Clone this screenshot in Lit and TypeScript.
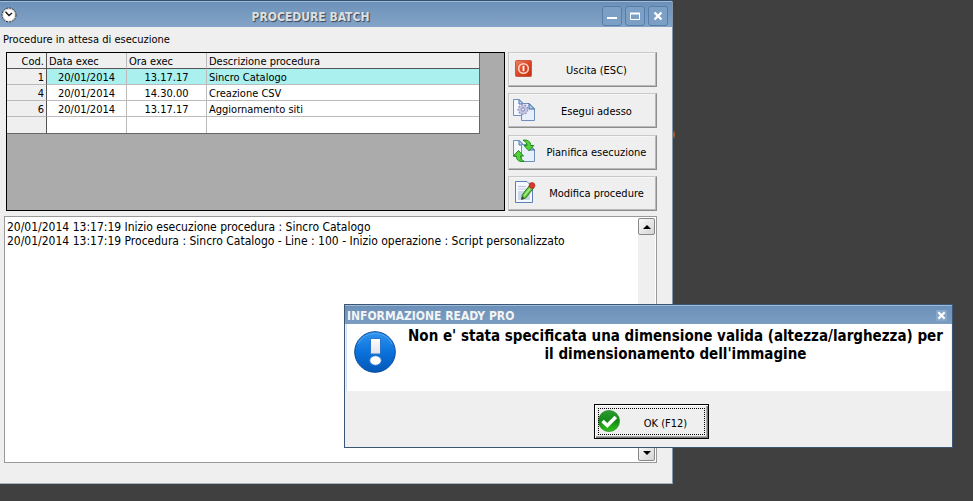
import { LitElement, html, css, svg } from "lit";
import { customElement, state } from "lit/decorators.js";
import { classMap } from "lit/directives/class-map.js";

interface Procedure {
  code: string;
  date: string;
  time: string;
  description: string;
}

const PROCEDURES: Procedure[] = [
  { code: "1", date: "20/01/2014", time: "13.17.17", description: "Sincro Catalogo" },
  { code: "4", date: "20/01/2014", time: "14.30.00", description: "Creazione CSV" },
  { code: "6", date: "20/01/2014", time: "13.17.17", description: "Aggiornamento siti" },
  { code: "", date: "", time: "", description: "" },
];

const LOG = [
  "20/01/2014 13:17:19 Inizio esecuzione procedura : Sincro Catalogo",
  "20/01/2014 13:17:19 Procedura : Sincro Catalogo - Line : 100 - Inizio operazione : Script personalizzato",
].join("\n");

const pages = svg`
  <path d="M1.5 1.5H7L11.5 6V17.5H1.5Z" fill="#f4f8ff" stroke="#6f8fbc"/>
  <path d="M7 1.5V6H11.5Z" fill="#c9dcf5" stroke="#4f74aa"/>
  <path d="M9.5 5.5H17L22.5 11V22.5H9.5Z" fill="#e6effc" stroke="#6f8fbc"/>
  <path d="M17 5.5V11H22.5Z" fill="#b7cfee" stroke="#3f689f"/>`;

const powerIcon = html`<svg class="icon" viewBox="0 0 24 24" aria-hidden="true">
  <defs><linearGradient id="p" x1="0" y1="0" x2="1" y2="1"><stop offset="0" stop-color="#ee8064"/><stop offset=".5" stop-color="#db4826"/><stop offset="1" stop-color="#c62f12"/></linearGradient></defs>
  <rect x="3.5" y="3.5" width="16" height="16" rx="1" fill="url(#p)" stroke="#c25a44"/>
  <circle cx="11.5" cy="11.5" r="4.8" fill="none" stroke="#ffd9cc" stroke-width="1.5"/>
  <path d="M11.5 8.800V14.200" stroke="#fff" stroke-width="1.8"/>
</svg>`;

const runIcon = html`<svg class="icon" viewBox="0 0 24 24" aria-hidden="true">
  ${pages}
  <circle cx="11" cy="11.5" r="4.6" fill="#c4c4e2" stroke="#9a9ac6" stroke-width="1.8" stroke-dasharray="2 1.2"/>
  <circle cx="11" cy="11.5" r="4" fill="#c3c3e0"/>
  <circle cx="11" cy="11.5" r="1.6" fill="#eeeefa" stroke="#8484b5"/>
</svg>`;

const planIcon = html`<svg class="icon" viewBox="0 0 24 24" aria-hidden="true">
  ${pages}
  <path d="M11 1.2C16 .4 18.7 3 18.8 6.500H21.8L17 11.8L12 6.500H15C15 4.5 13.8 2.6 11 1.2Z" fill="#55d13b" stroke="#1d8a17"/>
  <path d="M12.2 22.3C7.5 23.2 4.4 21.4 4.3 17H1.3L6.5 11.5L11.5 17H8.5C8.5 19.4 9.7 21.2 12.2 22.3Z" fill="#55d13b" stroke="#1d8a17"/>
</svg>`;

const editIcon = html`<svg class="icon" viewBox="0 0 24 24" aria-hidden="true">
  <path d="M3.5 1.5H15L20.5 7V22.5H3.5Z" fill="#f5f9ff" stroke="#5c80b5"/>
  <path d="M6 6.500H14M6 9H14" stroke="#b9c6da"/>
  <rect x="6" y="11" width="12" height="9" fill="#cbd7e8"/>
  <path d="M9.500 19.500L10.300 14.800L17.500 5.500L21.300 8.300L13.900 17.800Z" fill="#5fc63d" stroke="#2b7d20"/>
  <path d="M12 16L19.500 6.700" stroke="#a7ec84" stroke-width="1.500"/>
  <path d="M9.500 19.500L10.200 16.500L12.400 18.300Z" fill="#3b3b2b"/>
  <circle cx="20" cy="5.500" r="2.900" fill="#d8392b" stroke="#a52b22" stroke-width=".7"/>
</svg>`;

const okIcon = html`<svg class="icon" viewBox="0 0 24 24" aria-hidden="true">
  <defs><linearGradient id="g" x1="0" y1="0" x2="0" y2="1"><stop offset="0" stop-color="#2c9b33"/><stop offset=".5" stop-color="#138a16"/><stop offset="1" stop-color="#2fc416"/></linearGradient></defs>
  <circle cx="12" cy="12" r="10.600" fill="url(#g)" stroke="#1c7d1d" stroke-width=".6"/>
  <path d="M5.500 12L10.300 16.500L18.800 8" fill="none" stroke="#fff" stroke-width="3.600"/>
</svg>`;

const infoIcon = html`<svg class="info" viewBox="0 0 42 42" aria-hidden="true">
  <defs>
    <linearGradient id="b" x1="0" y1="0" x2="0" y2="1"><stop offset="0" stop-color="#2f95ee"/><stop offset=".5" stop-color="#0a72dc"/><stop offset="1" stop-color="#0557b8"/></linearGradient>
    <linearGradient id="w" x1="0" y1="0" x2="0" y2="1"><stop offset="0" stop-color="#fff"/><stop offset="1" stop-color="#e2e2e8"/></linearGradient>
  </defs>
  <circle cx="21" cy="21" r="20.300" fill="url(#b)" stroke="#0a4c9c"/>
  <path d="M4 13A19 19 0 0 1 38 13" fill="none" stroke="#4ea3f0"/>
  <path d="M16.500 7.500H26.500V23H16.500Z" fill="url(#w)" stroke="#2a75cc"/>
  <ellipse cx="21.500" cy="29.500" rx="5.800" ry="4.800" fill="#fff" stroke="#2a75cc"/>
</svg>`;

const clockIcon = html`<svg class="clock" viewBox="0 0 16 16" aria-hidden="true">
  <circle cx="8" cy="8" r="7" fill="#d9d9d9" stroke="#333" stroke-dasharray="2 1"/>
  <circle cx="8" cy="8" r="5.500" fill="#fff"/>
  <path d="M4.500 4.800L8 8.500L11 6" fill="none" stroke="#111" stroke-width="1.300"/>
</svg>`;

const cross = svg`<path d="M1.500 1.500L8.500 8.500M8.500 1.500L1.500 8.500" stroke="#fff" stroke-width="2.400"/>`;

@customElement("app-root")
export class AppRoot extends LitElement {
  @state() private selected = 0;

  static styles = css`
    :host {
      display: flex;
      flex-direction: column;
      box-sizing: border-box;
      position: relative;
      min-height: 100vh;
      padding: 0 300px 17px 0;
      background: #404040;
      color: #000;
      font: 11px/14px "DejaVu Sans Condensed", "DejaVu Sans", sans-serif;
    }
    *, *::before { box-sizing: border-box; }
    button, textarea { font: inherit; color: inherit; margin: 0; }
    button { padding: 0; }
    h1, h2, p { margin: 0; }

    .desktop-item {
      position: absolute;
      top: 131px;
      right: 298px;
      width: 2px;
      height: 8px;
      border-radius: 0 2px 4px 0;
      background: linear-gradient(#7a4a30, #b0602c, #5a3d2e);
    }

    .window {
      flex: 1;
      display: flex;
      flex-direction: column;
      background: #efefef;
      border-top: 1px solid #35506e;
      border-right: 1px solid #8296aa;
      border-bottom: 1px solid #a9b4bf;
      border-top-right-radius: 3px;
    }
    .titlebar {
      display: flex;
      align-items: center;
      height: 26px;
      padding: 0 4px 0 1px;
      border-top: 1px solid #9dbad8;
      background: linear-gradient(#6c91b9, #84a4c7);
    }
    .titlebar h1 {
      flex: 1;
      padding: 4px 0 0 2px;
      text-align: center;
      font-size: 12px;
      line-height: 16px;
      color: #dedede;
      text-shadow: 1px 1px 1px #33475d;
    }
    .clock { width: 16px; height: 16px; }
    .controls { display: flex; gap: 3px; padding-top: 2px; }
    .control {
      display: grid;
      place-items: center;
      width: 20px;
      height: 20px;
      border: 1px solid #587da8;
      border-radius: 3px;
      background: #7c9fc6;
    }
    .control svg { width: 10px; height: 10px; }

    .content {
      flex: 1;
      display: flex;
      flex-direction: column;
      padding: 6px 15px 20px 4px;
    }
    .caption { margin-left: -1px; }
    .upper {
      display: flex;
      gap: 3px;
      margin: 5px 0 5px 2px;
    }
    .panel {
      flex: 1;
      height: 159px;
      padding-right: 24px;
      border: 1px solid #000;
      background: #ababab;
    }
    table {
      width: 100%;
      table-layout: fixed;
      border-collapse: separate;
      border-spacing: 0;
      border-right: 1px solid #666;
      border-bottom: 1px solid #666;
      background: #fff;
    }
    th, td {
      height: 16px;
      padding: 2px 2px 0;
      border-right: 1px solid #bbb;
      border-bottom: 1px solid #bbb;
      font-weight: normal;
      line-height: 13px;
      text-align: left;
      white-space: nowrap;
    }
    th { background: #efefef; }
    thead th { border-bottom-color: #555; }
    .code { width: 40px; text-align: right; border-right-color: #555; }
    .when { width: 80px; }
    td.when { text-align: center; }
    .selected td { background: #a9f0ee; }
    tr > :last-child { border-right: 0; }
    tbody tr:last-child > * { border-bottom: 0; }

    .actions {
      display: flex;
      flex-direction: column;
      justify-content: space-between;
      width: 149px;
    }
    .action {
      display: flex;
      align-items: center;
      height: 35px;
      padding: 0 1px 0 3px;
      border: 1px solid;
      border-color: #c9c9c9 #8d8d8d #8d8d8d #c9c9c9;
      box-shadow: inset -1px -1px #b9b9b9, inset 1px 1px #f6f6f6;
      background: #efefef;
    }
    .icon { flex: none; width: 24px; height: 24px; margin-bottom: 2px; }
    .action span { flex: 1; padding: 2px 0 0 2px; text-align: center; white-space: nowrap; }

    .log {
      flex: 1;
      display: flex;
      border: 1px solid #999;
      background: #fff;
      padding: 1px;
    }
    .log textarea {
      flex: 1;
      resize: none;
      border: 0;
      outline: 0;
      padding: 2px 1px;
      overflow: hidden;
      background: none;
      font-size: 12px;
      line-height: 14px;
    }
    .scroll {
      display: flex;
      flex-direction: column;
      justify-content: space-between;
      width: 17px;
      background: #efefef;
    }
    .arrow {
      display: grid;
      place-items: center;
      height: 17px;
      border: 1px solid #888;
      border-radius: 2px;
      background: linear-gradient(135deg, #fafafa, #d5d5d5);
    }
    .arrow svg { width: 8px; height: 4px; }

    .dialog {
      position: absolute;
      left: 344px;
      right: 20px;
      bottom: 53px;
      border: 1px solid #3b5675;
      background: #efefef;
    }
    .dialog-bar {
      display: flex;
      align-items: center;
      justify-content: space-between;
      height: 19px;
      padding: 0 5px 0 2px;
      border-top: 1px solid #9dbad8;
      background: linear-gradient(#6c91b9, #7b9dc2);
    }
    .dialog-bar h2 { padding-top: 2px; font-size: 12px; line-height: 14px; color: #f4f4f4; }
    .close {
      display: grid;
      place-items: center;
      width: 11px;
      height: 11px;
      border: 0;
      background: #87a6ca;
    }
    .close svg { width: 9px; height: 9px; }
    .message {
      display: flex;
      min-height: 67px;
      margin: 0 1px;
      border-left: 1px solid #cfe0f2;
      background: #fff;
    }
    .info { flex: none; width: 42px; height: 42px; margin: 7px 0 0 7px; }
    .message p {
      flex: 1;
      padding: 3px 6px 0 10px;
      text-align: center;
      font-size: 15px;
      line-height: 18px;
      font-weight: bold;
    }
    .footer { display: flex; justify-content: center; padding: 13px 0 8px 6px; }
    .ok {
      position: relative;
      display: flex;
      align-items: center;
      width: 115px;
      height: 35px;
      padding: 0 10px 0 2px;
      border: 1px solid #000;
      box-shadow: inset 1px 1px #fff, inset -1px -1px #777, inset -2px -2px #aaa;
      background: #efefef;
    }
    .ok::before {
      content: "";
      position: absolute;
      inset: 3px;
      border: 1px dotted #000;
    }
    .ok span { flex: 1; padding: 4px 0 0 12px; text-align: center; }
  `;

  private action(icon: unknown, label: string) {
    return html`<button class="action" type="button">${icon}<span>${label}</span></button>`;
  }

  render() {
    return html`
      <div class="desktop-item" aria-hidden="true"></div>
      <main class="window">
        <header class="titlebar">
          ${clockIcon}
          <h1>PROCEDURE BATCH</h1>
          <div class="controls">
            <button class="control" type="button" aria-label="Riduci"><svg viewBox="0 0 10 10"><path d="M0 7H10" stroke="#fff" stroke-width="2"/></svg></button>
            <button class="control" type="button" aria-label="Ingrandisci"><svg viewBox="0 0 10 10"><path d="M.5 2V8.500H9.500V2" fill="none" stroke="#fff"/><path d="M0 2.500H10" stroke="#fff" stroke-width="2"/></svg></button>
            <button class="control" type="button" aria-label="Chiudi"><svg viewBox="0 0 10 10">${cross}</svg></button>
          </div>
        </header>
        <div class="content">
          <p class="caption" id="caption">Procedure in attesa di esecuzione</p>
          <div class="upper">
            <div class="panel">
              <table aria-labelledby="caption">
                <thead>
                  <tr>
                    <th class="code" scope="col">Cod.</th>
                    <th class="when" scope="col">Data exec</th>
                    <th class="when" scope="col">Ora exec</th>
                    <th scope="col">Descrizione procedura</th>
                  </tr>
                </thead>
                <tbody>
                  ${PROCEDURES.map(
                    (row, i) => html`<tr class=${classMap({ selected: i === this.selected })} @click=${() => (this.selected = i)}>
                      <th class="code" scope="row">${row.code}</th>
                      <td class="when">${row.date}</td>
                      <td class="when">${row.time}</td>
                      <td>${row.description}</td>
                    </tr>`
                  )}
                </tbody>
              </table>
            </div>
            <div class="actions">
              ${this.action(powerIcon, "Uscita (ESC)")}
              ${this.action(runIcon, "Esegui adesso")}
              ${this.action(planIcon, "Pianifica esecuzione")}
              ${this.action(editIcon, "Modifica procedure")}
            </div>
          </div>
          <div class="log">
            <textarea readonly aria-label="Registro esecuzione" .value=${LOG}></textarea>
            <div class="scroll">
              <button class="arrow" type="button" aria-label="Scorri su"><svg viewBox="0 0 8 4"><path d="M0 4L4 0L8 4Z"/></svg></button>
              <button class="arrow" type="button" aria-label="Scorri giù"><svg viewBox="0 0 8 4"><path d="M0 0L4 4L8 0Z"/></svg></button>
            </div>
          </div>
        </div>
      </main>
      <section class="dialog" role="dialog" aria-labelledby="dialog-title">
        <header class="dialog-bar">
          <h2 id="dialog-title">INFORMAZIONE READY PRO</h2>
          <button class="close" type="button" aria-label="Chiudi avviso"><svg viewBox="0 0 10 10">${cross}</svg></button>
        </header>
        <div class="message">
          ${infoIcon}
          <p>Non e' stata specificata una dimensione valida (altezza/larghezza) per il dimensionamento dell'immagine</p>
        </div>
        <footer class="footer">
          <button class="ok" type="button">${okIcon}<span>OK (F12)</span></button>
        </footer>
      </section>
    `;
  }
}
